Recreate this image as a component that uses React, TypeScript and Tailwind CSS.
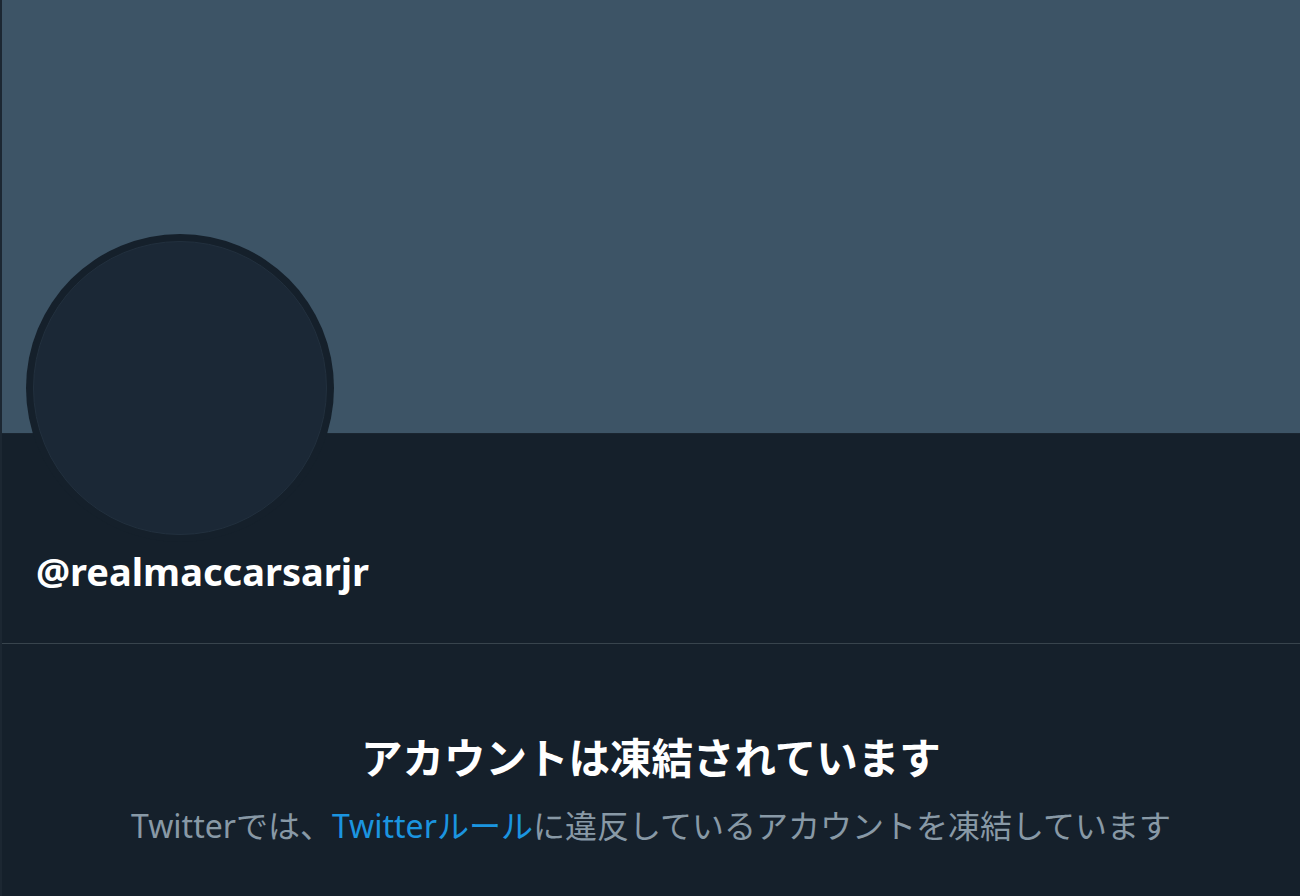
import React from "react";

export default function App() {
  return (
    <div
      className="w-[1300px] h-[896px] bg-[#15202b] overflow-hidden border-l-2 border-[#1c2732]"
      style={{ fontFamily: '"Noto Sans", "Noto Sans CJK JP", sans-serif' }}
    >
      <div className="relative">
        <div className="h-[434px] bg-[#3d5466] border-b border-[#1a2530]" />
        <div className="absolute left-[24px] top-[234px] w-[308px] h-[308px] rounded-full bg-[#15202b] p-[7px]">
          <div className="w-full h-full rounded-full bg-[#1b2836] border border-[#22303e]" />
        </div>
      </div>
      <div className="h-[209px] flex items-end pb-[52px] pl-[34px]">
        <div className="text-[38px] leading-[40px] font-bold text-white">@realmaccarsarjr</div>
      </div>
      <div className="border-t border-[#38444d]" />
      <div className="flex flex-col items-center pt-[88px]">
        <div className="text-[41.5px] leading-[52px] font-bold text-white">
          アカウントは凍結されています
        </div>
        <div className="mt-[20px] text-[32px] leading-[44px] text-[#8899a6]">
          Twitterでは、<span className="text-[#1b95e0]">Twitterルール</span>に違反しているアカウントを凍結しています
        </div>
      </div>
    </div>
  );
}
